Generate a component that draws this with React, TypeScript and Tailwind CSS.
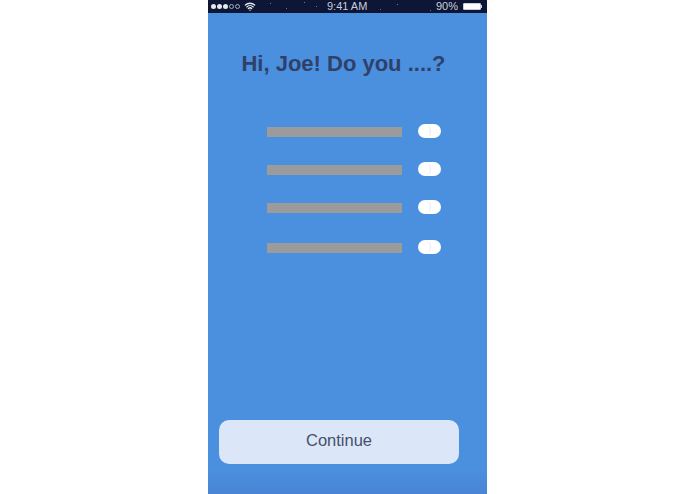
import { Wifi } from 'lucide-react';

const rows = ['mt-0', 'mt-6', 'mt-6', 'mt-[26px]'];
const stars = [
  'left-[62px] top-[3px]',
  'left-[78px] top-[8px]',
  'left-[96px] top-[2px]',
  'left-[108px] top-[6px]',
  'left-[172px] top-[9px]',
  'left-[189px] top-[4px]',
  'left-[222px] top-[10px]',
];

function Toggle() {
  return (
    <div className="relative h-[14px] w-[23px] rounded-full bg-white">
      <div className="absolute left-0 top-0 h-[14px] w-[13px] rounded-full border-r border-[#e6e9f2]" />
    </div>
  );
}

function StatusBar() {
  return (
    <div className="relative flex h-[13px] items-center justify-between bg-[#0e1635] pl-[3px] pr-[5px] text-[11px] leading-none text-[#c9cdd9]">
      {stars.map((pos) => (
        <span key={pos} className={`absolute h-[1px] w-[1px] bg-[#6f7896] ${pos}`} />
      ))}
      <div className="flex items-center gap-[1px]">
        {[0, 1, 2].map((i) => (
          <span key={i} className="h-[5px] w-[5px] rounded-full bg-[#e6e8ee]" />
        ))}
        {[3, 4].map((i) => (
          <span key={i} className="h-[5px] w-[5px] rounded-full border border-[#a9aebe]" />
        ))}
        <Wifi className="ml-[3px] h-[11px] w-[12px] text-[#e6e8ee]" strokeWidth={3} />
      </div>
      <span className="absolute left-[119px] top-[1px]">9:41 AM</span>
      <div className="flex items-center gap-[5px]">
        <span>90%</span>
        <div className="flex items-center">
          <div className="h-[7px] w-[18px] rounded-[1px] border border-[#c9cdd9] bg-white" />
          <div className="h-[3px] w-[1px] bg-[#c9cdd9]" />
        </div>
      </div>
    </div>
  );
}

export default function App() {
  return (
    <div className="flex h-[494px] justify-center bg-white font-['Liberation_Sans',Arial,sans-serif]">
      <div className="flex w-[279px] flex-col bg-gradient-to-b from-[#4b8fdf] from-95% to-[#4885d4]">
        <StatusBar />
        <h1 className="mt-[38px] pr-[8px] text-center text-[22px] font-bold leading-[26px] text-[#2f4169]">
          Hi, Joe! Do you ....?
        </h1>
        <div className="mt-[47px] flex flex-col pl-[59px]">
          {rows.map((margin, i) => (
            <div key={i} className={`flex items-center ${margin}`}>
              <div className="mt-[2px] h-[10px] w-[135px] bg-[#9b9b9b]" />
              <div className="ml-[16px]">
                <Toggle />
              </div>
            </div>
          ))}
        </div>
        <div className="mt-[166px] px-[11px]">
          <button className="h-[44px] w-[240px] rounded-[10px] bg-[#dbe7f8] pb-[3px] text-[16.5px] text-[#45506a]">
            Continue
          </button>
        </div>
      </div>
    </div>
  );
}
